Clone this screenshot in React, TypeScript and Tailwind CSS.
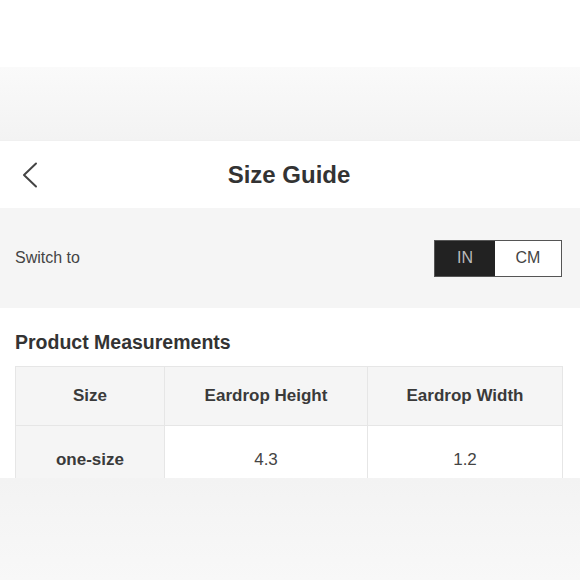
const font = { fontFamily: '"Liberation Sans", Arial, sans-serif' };

const headers = ["Size", "Eardrop Height", "Eardrop Width"];
const rows = [["one-size", "4.3", "1.2"]];

function UnitToggle() {
  return (
    <div className="flex h-[37px] border border-[#555] mr-[18px]">
      <div className="flex w-[60px] items-center justify-center bg-[#222] text-[16px] text-[#bbb]">IN</div>
      <div className="flex w-[66px] items-center justify-center bg-white text-[16px] text-[#444]">CM</div>
    </div>
  );
}

export default function App() {
  return (
    <div className="flex h-[580px] w-[580px] flex-col overflow-hidden bg-white text-[#333]" style={font}>
      <div className="h-[67px] shrink-0 bg-white" />
      <div className="h-[74px] shrink-0 border-b border-[#f0f0f0] bg-gradient-to-b from-[#fafafa] to-[#f3f3f3]" />

      <header className="flex h-[67px] shrink-0 items-center bg-white pl-[21px]">
        <svg width="18" height="28" viewBox="0 0 18 28" fill="none" className="shrink-0">
          <polyline points="15,2.5 3,14 15,25.5" stroke="#444" strokeWidth="2" strokeLinecap="round" strokeLinejoin="round" />
        </svg>
        <h1 className="flex-1 pr-[41px] text-center text-[24px] font-bold text-[#333]">Size Guide</h1>
      </header>

      <div className="flex h-[100px] shrink-0 items-center justify-between bg-[#f5f5f5] pl-[15px]">
        <span className="text-[16px] text-[#444]">Switch to</span>
        <UnitToggle />
      </div>

      <section className="h-[170px] shrink-0 overflow-hidden bg-white px-[15px] pt-[22px]">
        <h2 className="text-[19.5px] font-bold leading-[24px] text-[#333]">Product Measurements</h2>
        <div className="mt-[12px] w-[548px] border border-[#e6e6e6]">
          <div className="grid grid-cols-[148px_203px_1fr] bg-[#f5f5f5]">
            {headers.map((h, i) => (
              <div
                key={h}
                className={`flex h-[58px] items-center justify-center text-[17px] font-bold text-[#3a3a3a] ${
                  i > 0 ? "border-l border-[#e6e6e6]" : ""
                }`}
              >
                {h}
              </div>
            ))}
          </div>
          {rows.map((r) => (
            <div key={r[0]} className="grid grid-cols-[148px_203px_1fr] border-t border-[#e6e6e6]">
              {r.map((c, i) => (
                <div
                  key={i}
                  className={`flex h-[68px] items-center justify-center text-[17px] ${
                    i === 0 ? "bg-[#f5f5f5] font-bold text-[#3a3a3a]" : "border-l border-[#e6e6e6] bg-white text-[#444]"
                  }`}
                >
                  {c}
                </div>
              ))}
            </div>
          ))}
        </div>
      </section>

      <div className="flex-1 bg-gradient-to-b from-[#f3f3f3] to-[#f8f8f8]" />
    </div>
  );
}
